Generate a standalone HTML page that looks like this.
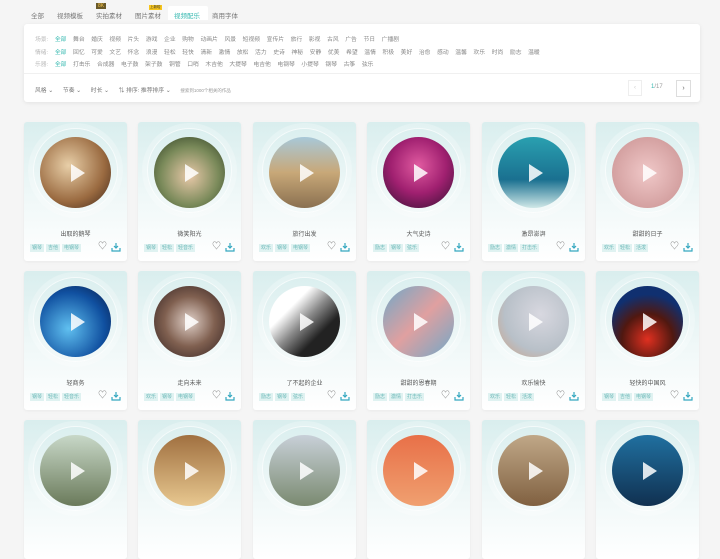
<!DOCTYPE html>
<html><head><meta charset="utf-8"><style>
*{margin:0;padding:0;box-sizing:border-box}
body{width:720px;height:482px;overflow:hidden;background:#f5f5f5;font-family:"Liberation Sans","Noto Sans CJK SC",sans-serif;position:relative;color:#666}
.tabs{position:absolute;top:10px;left:24px;font-size:6.5px;color:#777}
.tabs span{position:absolute;top:0;white-space:nowrap}
.panel{position:absolute;left:24px;top:24px;width:676px;height:78px;background:#fff;border-radius:3px;box-shadow:0 1px 4px rgba(0,0,0,.08)}
.row{position:absolute;left:11px;font-size:5.8px;color:#888;white-space:nowrap}
.row span{margin-right:6.6px}
.row .l{color:#bbb}.row .a{color:#35b8b0}
.card{position:absolute;width:103px;height:139px;border-radius:3px;background:linear-gradient(180deg,#d9eeee 0%,#f0f8f8 55%,#fff 100%);box-shadow:0 1px 3px rgba(0,0,0,.05)}
.ring{position:absolute;left:9px;top:6px;width:85px;height:85px;border-radius:50%;border:1px solid rgba(255,255,255,.7);box-shadow:0 0 0 5px rgba(255,255,255,.25)}
.circ{position:absolute;left:16px;top:15px;width:71px;height:71px;border-radius:50%}
.play{position:absolute;left:47px;top:42px;width:0;height:0;border-left:14px solid rgba(255,255,255,.85);border-top:9px solid transparent;border-bottom:9px solid transparent}
.t{position:absolute;top:107px;width:100%;text-align:center;font-size:6px;color:#555}
.tg{position:absolute;left:6px;top:122px;font-size:5px;color:#6bb8b8;white-space:nowrap}
.tg span{background:#dff2f1;padding:1px 2px;margin-right:2px}
.hb{position:absolute;right:20px;top:119px;font-size:9px;color:#777;line-height:10px}
.dl{position:absolute;right:6px;top:120px;width:10px;height:10px}
</style></head><body>
<div class="tabs">
<span style="left:144px;top:-4px;width:40px;height:14px;background:#fff;border-radius:2px 2px 0 0"></span>
<span style="left:7px">全部</span><span style="left:33px">视频模板</span><span style="left:72px">实拍素材</span><span style="left:111px">图片素材</span>
<span style="left:150px;color:#35b8b0">视频配乐</span><span style="left:188px">商用字体</span>
<span style="left:72px;top:-7px;background:#6a5a2a;color:#f5c34a;font-size:5px;padding:0 2px">8K</span>
<span style="left:125px;top:-5px;background:#f7c51c;color:#333;font-size:3.5px;padding:0 1px">上新啦</span>
</div>
<div class="panel">
<div class="row" style="top:10px"><span class="l">场景:</span><span class="a">全部</span><span>舞台</span><span>婚庆</span><span>视频</span><span>片头</span><span>游戏</span><span>企业</span><span>购物</span><span>动画片</span><span>风景</span><span>短视频</span><span>宣传片</span><span>旅行</span><span>影视</span><span>古风</span><span>广告</span><span>节日</span><span>广播剧</span></div>
<div class="row" style="top:23px"><span class="l">情绪:</span><span class="a">全部</span><span>回忆</span><span>可爱</span><span>文艺</span><span>怀念</span><span>浪漫</span><span>轻松</span><span>轻快</span><span>清新</span><span>激情</span><span>放松</span><span>活力</span><span>史诗</span><span>神秘</span><span>安静</span><span>优美</span><span>希望</span><span>温情</span><span>积极</span><span>美好</span><span>治愈</span><span>感动</span><span>温馨</span><span>欢乐</span><span>时尚</span><span>励志</span><span>温暖</span></div>
<div class="row" style="top:35px"><span class="l">乐器:</span><span class="a">全部</span><span>打击乐</span><span>合成器</span><span>电子鼓</span><span>架子鼓</span><span>铜管</span><span>口哨</span><span>木吉他</span><span>大提琴</span><span>电吉他</span><span>电钢琴</span><span>小提琴</span><span>钢琴</span><span>古筝</span><span>弦乐</span></div>
<div style="position:absolute;left:0;right:0;top:49px;border-top:1px solid #f0f0f0"></div>
<div class="row" style="top:61px;color:#777"><span>风格 ⌄</span>&nbsp;&nbsp;<span>节奏 ⌄</span>&nbsp;&nbsp;<span>时长 ⌄</span>&nbsp;&nbsp;<span>⇅ 排序: 推荐排序 ⌄</span>&nbsp;&nbsp;<span style="font-size:4.5px;color:#999">搜索到1000个相关的作品</span></div>
<div style="position:absolute;left:604px;top:56px;width:14px;height:16px;border:1px solid #eee;font-size:6px;color:#ccc;text-align:center;line-height:14px">‹</div>
<div style="position:absolute;left:627px;top:60px;font-size:6px;color:#999"><span style="color:#35b8b0">1</span>/17</div>
<div style="position:absolute;left:652px;top:56px;width:15px;height:17px;border:1px solid #ddd;font-size:7px;color:#666;text-align:center;line-height:15px">›</div>
</div>
<div id="g"></div>
<script>
var xs=[24,138,253,367,482,596],ys=[122,271,420];
var t=[["出取的鹅琴","微笑阳光","旅行出发","大气史诗","激昂澎湃","甜甜的日子"],["轻商务","走向未来","了不起的企业","甜甜的恩春期","欢乐愉快","轻快的中国风"],["","","","","",""]];
var c=[["radial-gradient(circle at 40% 40%,#e8cfa8,#9a6a40 60%,#3a2418)","radial-gradient(circle at 50% 55%,#e8c8a8,#7a8a5a 55%,#2a3a20)","linear-gradient(180deg,#a8c8d8,#c8a878 50%,#8a7050)","radial-gradient(circle at 50% 40%,#e05aa0,#a02070 50%,#301030)","linear-gradient(180deg,#2aa0b0,#1a7090 60%,#d0e8e8)","radial-gradient(circle,#f0c8c8,#c89090)"],
["radial-gradient(circle at 40% 60%,#60c0f0,#1050a0 60%,#081840)","radial-gradient(circle at 50% 50%,#e0d0c8,#806050 50%,#302020)","linear-gradient(135deg,#fff 30%,#888 50%,#222 70%)","linear-gradient(135deg,#70a8c8,#e0a0a0 50%,#70a8c8)","radial-gradient(circle at 60% 40%,#d8d8e0,#b8c0c8 60%,#d0a080)","radial-gradient(circle at 50% 75%,#e03020,#501810 40%,#103070 70%)"],
["linear-gradient(180deg,#c8d8c8,#6a7a5a)","linear-gradient(180deg,#a07040,#e8c890)","linear-gradient(180deg,#c8d0d8,#7a8a70)","linear-gradient(180deg,#e87048,#f0a070)","linear-gradient(180deg,#c0a888,#806040)","linear-gradient(180deg,#2070a0,#103050)"]];
var tg=[["钢琴","吉他","电钢琴"],["钢琴","轻松","轻音乐"],["欢乐","钢琴","电钢琴"],["励志","钢琴","弦乐"],["励志","激情","打击乐"],["欢乐","轻松","活泼"]];
var h="";
for(var r=0;r<3;r++)for(var i=0;i<6;i++){
h+='<div class="card" style="left:'+xs[i]+'px;top:'+ys[r]+'px"><div class="ring"></div><div class="circ" style="background:'+c[r][i]+'"></div><div class="play"></div>';
if(t[r][i]){h+='<div class="t">'+t[r][i]+'</div><div class="tg">'+tg[(i+r)%6].map(function(x){return"<span>"+x+"</span>"}).join("")+'</div><div class="hb">♡</div><svg class="dl" viewBox="0 0 10 10"><path d="M5 1v5M3 4l2 2 2-2M1 6v3h8V6" fill="none" stroke="#35a8c0" stroke-width="1.2"/></svg>';}
h+='</div>';}
document.getElementById("g").innerHTML=h;
</script>
</body></html>
